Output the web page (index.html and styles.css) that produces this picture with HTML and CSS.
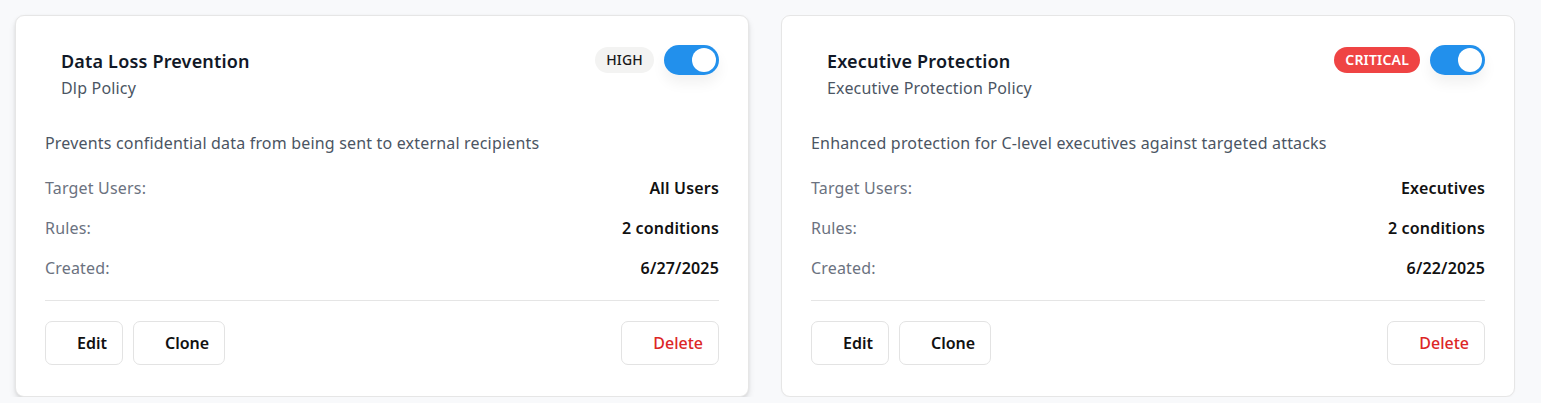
FILE: index.html
```
<!DOCTYPE html>
<html>
<head>
<meta charset="utf-8">
<link rel="stylesheet" href="styles.css">
</head>
<body>
<div class="grid">
  <div class="card card-hover">
    <div class="head">
      <div class="titles">
        <div class="title">Data Loss Prevention</div>
        <div class="subtitle">Dlp Policy</div>
      </div>
      <div class="controls">
        <span class="badge badge-high">HIGH</span>
        <span class="toggle"><span class="knob"></span></span>
      </div>
    </div>
    <p class="desc">Prevents confidential data from being sent to external recipients</p>
    <div class="rows">
      <div class="row"><span class="label">Target Users:</span><span class="value">All Users</span></div>
      <div class="row"><span class="label">Rules:</span><span class="value">2 conditions</span></div>
      <div class="row"><span class="label">Created:</span><span class="value">6/27/2025</span></div>
    </div>
    <div class="actions">
      <div class="left">
        <button class="btn">Edit</button>
        <button class="btn">Clone</button>
      </div>
      <button class="btn btn-del">Delete</button>
    </div>
  </div>
  <div class="card">
    <div class="head">
      <div class="titles">
        <div class="title">Executive Protection</div>
        <div class="subtitle">Executive Protection Policy</div>
      </div>
      <div class="controls">
        <span class="badge badge-critical">CRITICAL</span>
        <span class="toggle"><span class="knob"></span></span>
      </div>
    </div>
    <p class="desc">Enhanced protection for C-level executives against targeted attacks</p>
    <div class="rows">
      <div class="row"><span class="label">Target Users:</span><span class="value">Executives</span></div>
      <div class="row"><span class="label">Rules:</span><span class="value">2 conditions</span></div>
      <div class="row"><span class="label">Created:</span><span class="value">6/22/2025</span></div>
    </div>
    <div class="actions">
      <div class="left">
        <button class="btn">Edit</button>
        <button class="btn">Clone</button>
      </div>
      <button class="btn btn-del">Delete</button>
    </div>
  </div>
</div>
</body>
</html>
```
FILE: styles.css
```
* { box-sizing: border-box; }
html, body { margin: 0; padding: 0; }
body {
  background: #f8f9fb;
  font-family: "Noto Sans", "Open Sans", sans-serif;
  color: #111;
  letter-spacing: 0.18px;
}
.grid {
  display: grid;
  grid-template-columns: 734px 734px;
  gap: 32px;
  padding: 15px 0 0 15px;
}
.card {
  background: #fff;
  border: 1px solid #e6e6e6;
  border-radius: 9px;
  padding: 29px 29px 31px;
  box-shadow: 0 1px 2px rgba(0,0,0,0.03);
}
.card-hover {
  box-shadow: 0 4px 6px rgba(0,0,0,0.10), 0 1px 3px rgba(0,0,0,0.06);
}
.head {
  display: flex;
  justify-content: space-between;
  align-items: flex-start;
}
.titles { padding: 3px 0 0 16px; }
.title {
  font-size: 18px;
  font-weight: 600;
  line-height: 26px;
  color: #111827;
}
.subtitle {
  font-size: 16px;
  line-height: 28px;
  color: #4b5563;
}
.controls {
  display: flex;
  align-items: center;
  gap: 10px;
}
.badge {
  display: inline-flex;
  align-items: center;
  height: 26px;
  padding: 0 11px;
  border-radius: 13px;
  font-size: 14px;
  font-weight: 500;
  line-height: 1;
}
.badge-high { background: #f3f3f2; color: #1a1a1a; }
.badge-critical { background: #ef4444; color: #fff; font-weight: 600; }
.toggle {
  width: 55px;
  height: 30px;
  border-radius: 15px;
  background: #2290ec;
  display: flex;
  align-items: center;
  justify-content: flex-end;
  padding-right: 3px;
  box-shadow: 0 8px 14px rgba(0,0,0,0.06);
}
.knob {
  width: 24px;
  height: 24px;
  border-radius: 50%;
  background: #fff;
}
.desc {
  margin: 29px 0 0;
  font-size: 16px;
  line-height: 24px;
  color: #4b5563;
}
.rows {
  margin-top: 21px;
  display: flex;
  flex-direction: column;
  gap: 16px;
  padding-bottom: 20px;
  border-bottom: 1px solid #e5e5e5;
}
.row {
  display: flex;
  justify-content: space-between;
  font-size: 16px;
  line-height: 24px;
}
.label { color: #6b7280; }
.value { font-weight: 600; color: #111; }
.actions {
  margin-top: 20px;
  display: flex;
  justify-content: space-between;
}
.left { display: flex; gap: 10px; }
.btn {
  height: 44px;
  padding: 0 15px 0 31px;
  background: #fff;
  border: 1px solid #e3e3e3;
  border-radius: 7px;
  font-family: inherit;
  font-size: 16px;
  font-weight: 600;
  letter-spacing: 0;
  color: #111;
}
.btn-del { color: #dc2626; font-weight: 500; }
```
